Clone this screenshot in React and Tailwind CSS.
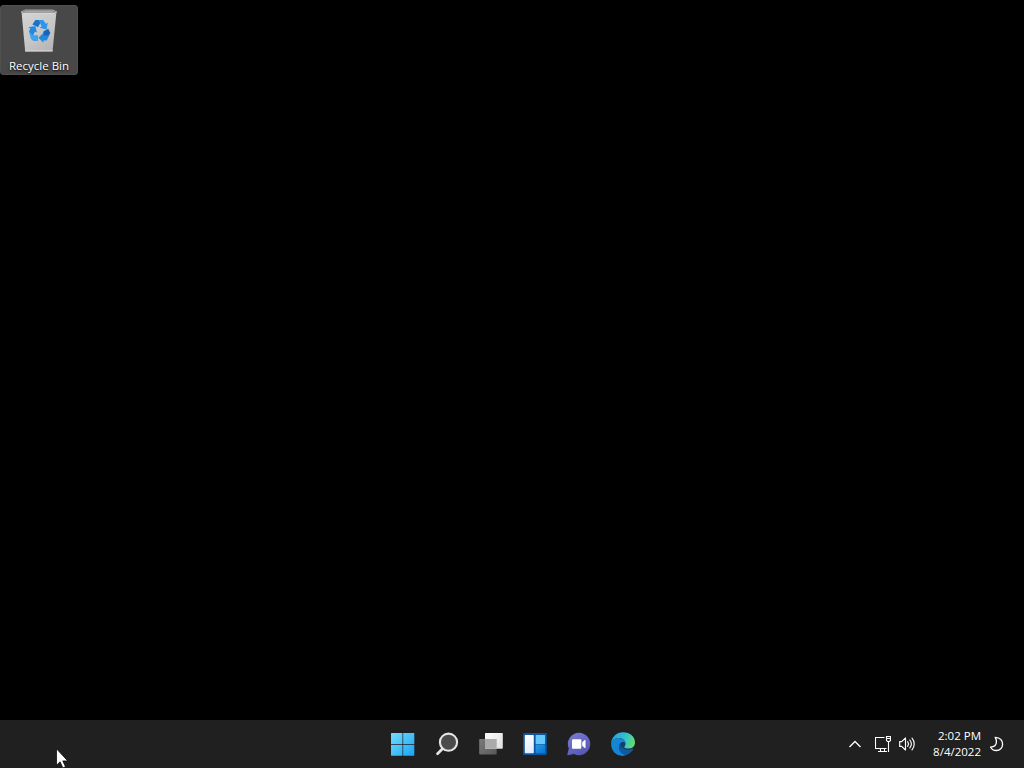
import React from 'react';

const RecycleBinIcon = () => (
  <svg className="block w-[38px] h-[44px]" viewBox="0 0 38 44" fill="none">
    <defs>
      <linearGradient id="binBody" x1="4" y1="4" x2="32" y2="42" gradientUnits="userSpaceOnUse">
        <stop stopColor="#d4d4d4" />
        <stop offset="0.55" stopColor="#c6c6c6" />
        <stop offset="1" stopColor="#b4b4b4" />
      </linearGradient>
    </defs>
    <path d="M1.5 2.5L5 .8H33l3.5 1.7-4 40.2H5.2z" fill="url(#binBody)" />
    <path d="M1.5 2.5L5 .8H33l3.5 1.7-.2 2.1H1.8z" fill="#8f8f8f" />
    <path d="M4.5 2.6L6 1.7H32l1.6.9v1H4.5z" fill="#a5a5a5" />
    <path d="M1.5 2.6L3.2 4.4H34.8l1.7-1.8" stroke="#e6e6e6" strokeWidth=".8" />
    <path d="M5.2 41.6h27.4" stroke="#cfcfcf" strokeWidth="1" />
    <path d="M12.4 15.5l3-4.4h6.2l-3.5 7.2z" fill="#1a72cb" />
    <path d="M18.4 11.1h4.8l2.6 3.6 2-.9-1.3 6.6-6.8-1.7 2-1.5z" fill="#2d95ea" />
    <path d="M8.3 18.2l7-1.2 1.6 6.4-2-.7-2.4 4.8-3.6-5.1 1.4-2.8z" fill="#218be2" />
    <path d="M9 22.4l3.4 3.9h5.6v5.8h-4.6l-2.5-2.4z" fill="#3ba3f0" />
    <path d="M23.4 22.4l4.8-2.6 2.1 4.2-1.9 3.3h-5.4z" fill="#1565bf" />
    <path d="M29.2 26.2l-2.4 5.4h-3.4v2.2l-5-5.1 5-4.6v2.3h4z" fill="#2389e0" />
  </svg>
);

const StartIcon = () => (
  <svg className="block size-6" viewBox="0 0 24 24">
    <defs>
      <linearGradient id="startBlue" x1="0" y1="0" x2="24" y2="24" gradientUnits="userSpaceOnUse">
        <stop stopColor="#78dcff" />
        <stop offset="1" stopColor="#16a4f5" />
      </linearGradient>
    </defs>
    <path d="M.5 1h11v11H0V1.5zM12.2 1H23l.3.5V12H12.2zM0 12.8h11.5v11H.5l-.5-.5zM12.2 12.8h11.1v10.5l-.3.5H12.2z" fill="url(#startBlue)" />
  </svg>
);

const SearchIcon = () => (
  <svg className="block size-6" viewBox="0 0 24 24" fill="none">
    <path d="M8 16.2l-5.5 5.5" stroke="#e4e4e4" strokeWidth="2.7" strokeLinecap="round" />
    <circle cx="13.5" cy="10.2" r="8.6" fill="#4b4b4b" stroke="#e4e4e4" strokeWidth="2.1" />
  </svg>
);

const TaskViewIcon = () => (
  <svg className="block size-6" viewBox="0 0 24 24">
    <defs>
      <linearGradient id="taskFront" x1="6" y1="1" x2="24" y2="16" gradientUnits="userSpaceOnUse">
        <stop stopColor="#ffffff" />
        <stop offset="1" stopColor="#dedede" />
      </linearGradient>
      <linearGradient id="taskBack" x1="0" y1="7" x2="16" y2="23" gradientUnits="userSpaceOnUse">
        <stop stopColor="#7c7c7c" />
        <stop offset="1" stopColor="#595959" />
      </linearGradient>
    </defs>
    <rect x=".2" y="7" width="17.5" height="15.6" rx=".8" fill="url(#taskBack)" />
    <rect x="6" y="1" width="17.8" height="15.8" rx=".8" fill="url(#taskFront)" />
    <path d="M6 7h11.7v9.8H6.8l-.8-.8z" fill="#aaaaaa" />
  </svg>
);

const WidgetsIcon = () => (
  <svg className="block size-6" viewBox="0 0 24 24">
    <defs>
      <linearGradient id="widgetWhite" x1="2" y1="3" x2="11" y2="22" gradientUnits="userSpaceOnUse">
        <stop stopColor="#ffffff" />
        <stop offset="1" stopColor="#dcebf8" />
      </linearGradient>
      <linearGradient id="widgetBlue" x1="13" y1="12" x2="22" y2="22" gradientUnits="userSpaceOnUse">
        <stop stopColor="#2798e8" />
        <stop offset="1" stopColor="#0871cf" />
      </linearGradient>
    </defs>
    <rect x="0" y="1" width="23.8" height="22" rx="1.3" fill="#0e559e" />
    <rect x="1.8" y="3" width="9" height="18.2" rx=".7" fill="url(#widgetWhite)" />
    <rect x="12.6" y="3" width="9.5" height="9" rx=".7" fill="#65c8fb" />
    <rect x="12.6" y="12.4" width="9.5" height="8.8" rx=".7" fill="url(#widgetBlue)" />
  </svg>
);

const ChatIcon = () => (
  <svg className="block size-6" viewBox="0 0 24 24">
    <defs>
      <linearGradient id="chatPurple" x1="6" y1="1" x2="18" y2="23" gradientUnits="userSpaceOnUse">
        <stop stopColor="#7779d0" />
        <stop offset="1" stopColor="#5355b2" />
      </linearGradient>
    </defs>
    <path d="M12 .8a11.2 11.2 0 1 1-5 21.2L1 23.2c-.5.1-.8-.3-.7-.8l1.5-5.8A11.2 11.2 0 0 1 12 .8z" fill="url(#chatPurple)" />
    <rect x="5" y="7.2" width="9.3" height="9.6" rx="1" fill="#ffffff" />
    <path d="M15.2 10.3l2.5-2.2c.4-.3.8-.1.8.4v7c0 .5-.4.7-.8.4l-2.5-2.2z" fill="#ffffff" />
  </svg>
);

const EdgeIcon = () => (
  <svg className="block size-6" viewBox="0 0 24 24">
    <defs>
      <linearGradient id="edgeTop" x1="1" y1="6" x2="24" y2="12" gradientUnits="userSpaceOnUse">
        <stop stopColor="#2ba4de" />
        <stop offset="0.5" stopColor="#31bfcf" />
        <stop offset="0.8" stopColor="#4fd39a" />
        <stop offset="1" stopColor="#70dd55" />
      </linearGradient>
      <linearGradient id="edgeLeft" x1="3" y1="8" x2="13" y2="24" gradientUnits="userSpaceOnUse">
        <stop stopColor="#1487d2" />
        <stop offset="1" stopColor="#1583d8" />
      </linearGradient>
    </defs>
    <circle cx="12.5" cy="13" r="5" fill="#123f6c" />
    <path d="M.1 11.2C.8 4.8 5.7.3 12 .3 19.2.3 24 5.2 24 10.4c0 3.8-2.9 6.2-6.4 6.2-3 0-4.3-1-4.3-1.7 0-.5 1.2-1 1.2-3C14.5 9 12.2 6 7.6 6 3.8 6 1.2 8.3.1 11.2z" fill="url(#edgeTop)" />
    <path d="M.1 11.8C.2 8.6 3.6 6 7.7 6c4.5 0 6.9 3 6.9 5.3-1.1-1.4-3-1.6-4.3-.8-2.8 1.6-3.5 6.6.4 9.8 1.1 1 2.8 2 4.8 2.5-1.1.7-2.5 1.1-4 1.1C5 23.9 0 18.7.1 11.8z" fill="url(#edgeLeft)" />
    <path d="M10.3 10.5c-1.6.9-2.4 2.4-2.4 4.4 0 4.8 3.7 8 8 8 3.1-1.2 5.3-3.5 6.6-5.8.3-.5-.1-.8-.6-.5-1.4.7-2.8 1-4.3 1-4.9 0-8.4-2.9-8.2-5.4 0-.7.4-1.3.9-1.7z" fill="#12599f" />
  </svg>
);

const apps = [
  { name: 'Start', Icon: StartIcon },
  { name: 'Search', Icon: SearchIcon },
  { name: 'Task View', Icon: TaskViewIcon },
  { name: 'Widgets', Icon: WidgetsIcon },
  { name: 'Chat', Icon: ChatIcon },
  { name: 'Microsoft Edge', Icon: EdgeIcon },
];

const NetworkIcon = () => (
  <svg className="block w-4 h-[18px]" viewBox="0 0 16 18" fill="none" stroke="#ffffff" strokeWidth="1.1">
    <path d="M9.5 2.5H.5v11H11.5M5.5 13.5v3M9.5 13.5v3M3 16.5h9" />
    <path d="M11.5 1.5h4v4l-1 1h-2l-1-1zM11.5 3.5h4M13.5 6.5V17" />
  </svg>
);

const VolumeIcon = () => (
  <svg className="block w-[17px] h-4" viewBox="0 0 17 16" fill="none" stroke="#ffffff" strokeWidth="1.15" strokeLinejoin="round" strokeLinecap="round">
    <path d="M.7 5.6h2L6.5 2v12L2.7 10.4h-2z" />
    <path d="M8.7 5.7a4 4 0 0 1 0 4.6M10.8 4a6.5 6.5 0 0 1 0 8M13 2.1a9 9 0 0 1 0 11.8" />
  </svg>
);

const MoonIcon = () => (
  <svg className="block size-4" viewBox="0 0 16 16" fill="none" stroke="#ffffff" strokeWidth="1.3" strokeLinejoin="round">
    <path d="M6.2 1.3c4.6.3 7.4 3.1 7.4 6.9 0 3.8-2.8 6.3-6.3 6.3-2.6 0-4.6-1.2-5.7-3.3 3.7-.3 5.7-2 5.8-4.9.1-1.9-.2-3.4-1.2-5z" />
  </svg>
);

const Taskbar = () => (
  <footer className="flex items-center h-12 bg-[#202020] pl-[381px] pr-[19px] text-white">
    <nav className="flex">
      {apps.map(({ name, Icon }) => (
        <button key={name} aria-label={name} className="flex w-11 h-12 items-center justify-center">
          <Icon />
        </button>
      ))}
    </nav>

    {/* System tray */}
    <div className="flex items-center ml-auto">
      <svg className="block w-3 h-2 mr-[14px]" viewBox="0 0 12 8" fill="none" stroke="#ffffff" strokeWidth="1.3">
        <path d="M.5 7L6 1.5 11.5 7" />
      </svg>
      <NetworkIcon />
      <div className="ml-2">
        <VolumeIcon />
      </div>
      <div className="ml-4 mr-2 w-[49px] text-right text-[11.5px] leading-4 whitespace-nowrap">
        <div>2:02 PM</div>
        <div>8/4/2022</div>
      </div>
      <MoonIcon />
    </div>
  </footer>
);

// The tail of the pointer runs past the bottom of the screen
const Cursor = () => (
  <svg className="absolute left-[56px] top-[748px] w-3 h-5" viewBox="0 0 12 20">
    <path d="M.5.8v16.4l3.6-3.4 2.8 6.1 2.6-1.1-2.7-5.9h4.9z" fill="#ffffff" stroke="#000000" strokeWidth=".7" />
  </svg>
);

const App = () => {
  return (
    <div className="relative flex flex-col w-[1024px] h-[768px] overflow-hidden bg-black font-['Open_Sans','Noto_Sans',sans-serif] select-none">
      <main className="flex-1 pt-[5px]">
        <div className="flex flex-col items-center w-[78px] h-[70px] pt-[3px] rounded-[3px] bg-[#484848] border border-[#505050]">
          <RecycleBinIcon />
          <span className="mt-[5px] text-[11.5px] leading-4 text-white whitespace-nowrap [text-shadow:0_1px_2px_#000]">Recycle Bin</span>
        </div>
      </main>
      <Taskbar />
      <Cursor />
    </div>
  );
};

export default App;
